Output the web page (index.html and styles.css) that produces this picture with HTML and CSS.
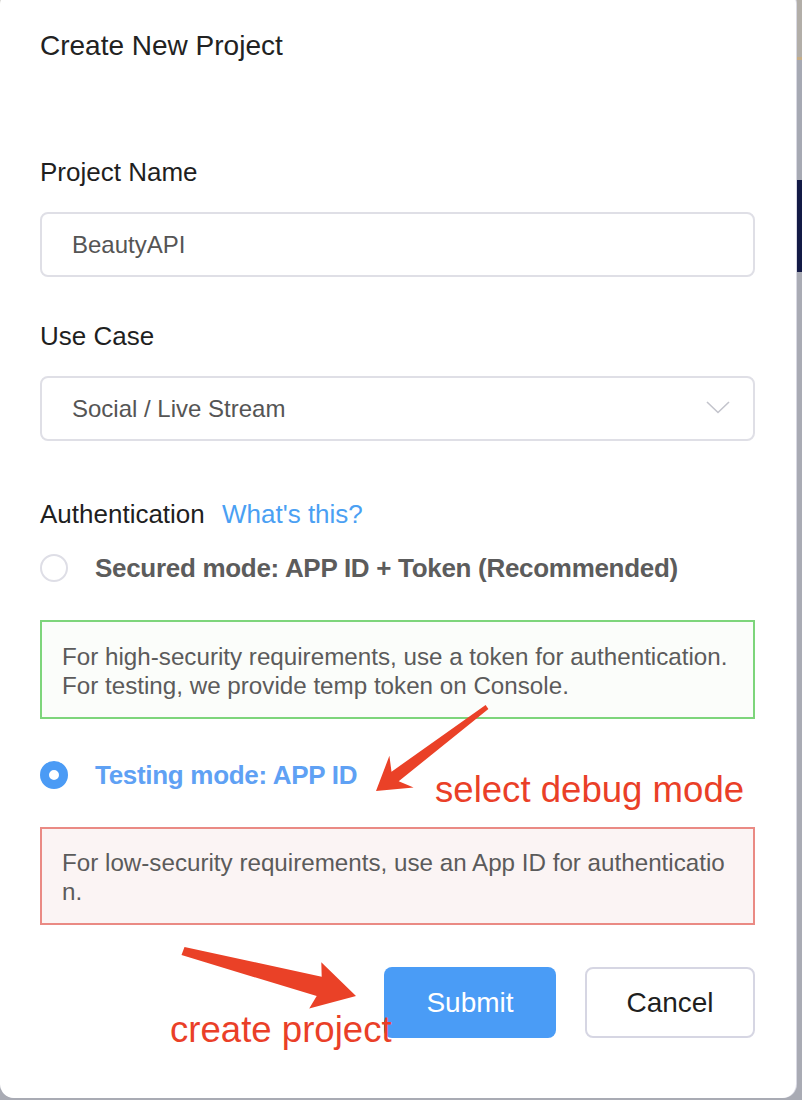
FILE: index.html
```html
<!DOCTYPE html>
<html lang="en">
<head>
<meta charset="utf-8">
<title>Create New Project</title>
<link rel="stylesheet" href="styles.css">
</head>
<body>
<div class="modal">
  <h1 class="title">Create New Project</h1>

  <div class="label">Project Name</div>
  <div class="input">BeautyAPI</div>

  <div class="label label-usecase">Use Case</div>
  <div class="input select">
    <span>Social / Live Stream</span>
    <svg class="chevron" width="24" height="13" viewBox="0 0 24 13"><path d="M1 1 L12 11.5 L23 1" fill="none" stroke="#c3c4cc" stroke-width="1.6"/></svg>
  </div>

  <div class="label label-auth">Authentication <a class="link">What's this?</a></div>

  <div class="radio-row radio-row-first">
    <span class="radio"></span>
    <span class="radio-label">Secured mode: APP ID + Token (Recommended)</span>
  </div>
  <div class="note note-green">For high-security requirements, use a token for authentication.<br>For testing, we provide temp token on Console.</div>

  <div class="radio-row radio-row-second">
    <span class="radio radio-checked"></span>
    <span class="radio-label radio-label-checked">Testing mode: APP ID</span>
  </div>
  <div class="note note-red">For low-security requirements, use an App ID for authenticatio<br>n.</div>

  <div class="actions">
    <button class="btn btn-primary">Submit</button>
    <button class="btn btn-default">Cancel</button>
  </div>

  <svg class="annot-arrows" width="797" height="1100" viewBox="0 0 797 1100">
    <polygon fill="#ea4127" points="376,791 413.6,787.6 398.7,781.3 488.4,708.9 485.6,705.1 391.5,771.7 389.4,755.8"/>
    <polygon fill="#ea4127" points="356,996 309.2,1008.6 316.7,996.1 181.5,955 184.5,947 321.7,976.7 321.3,962.2"/>
  </svg>
  <div class="annot annot-debug">select debug mode</div>
  <div class="annot annot-create">create project</div>
</div>
</body>
</html>
```

FILE: styles.css
```css
html, body {
  margin: 0;
  padding: 0;
}
body {
  width: 802px;
  height: 1100px;
  overflow: hidden;
  background: linear-gradient(to bottom,
    #b2aea8 0px, #b2aea8 57px,
    #c6ad86 57px, #c6ad86 60px,
    #a6a9b3 60px, #a6a9b3 180px,
    #131a46 180px, #131a46 272px,
    #a9abb4 272px, #a9abb4 1100px);
  font-family: "Liberation Sans", Arial, Helvetica, sans-serif;
}
.modal {
  position: relative;
  box-sizing: border-box;
  width: 796px;
  height: 1108px;
  margin-top: -10px;
  padding: 40px 41px 0 40px;
  background: #fff;
  border-radius: 14px;
  box-shadow: 1px 0 0 #d9d9e3;
}
.title {
  margin: 0;
  font-size: 28px;
  line-height: 32px;
  font-weight: normal;
  color: #222;
}
.label {
  margin-top: 95px;
  font-size: 26px;
  line-height: 30px;
  color: #1f1f1f;
}
.label-usecase { margin-top: 44px; }
.label-auth { margin-top: 58px; }
.link {
  color: #4aa0f3;
  margin-left: 10px;
}
.input {
  box-sizing: border-box;
  margin-top: 25px;
  height: 65px;
  border: 2px solid #dfdfe6;
  border-radius: 8px;
  padding: 0 30px;
  display: flex;
  align-items: center;
  font-size: 24px;
  color: #555;
}
.select {
  justify-content: space-between;
  padding-right: 23px;
}
.chevron { display: block; margin-top: -3px; }
.radio-row {
  display: flex;
  align-items: center;
  height: 30px;
}
.radio-row-first { margin-top: 24px; }
.radio-row-second { margin-top: 41px; }
.radio {
  box-sizing: border-box;
  width: 28px;
  height: 28px;
  border-radius: 50%;
  border: 2px solid #dedee6;
  background: #fff;
  margin-right: 27px;
  flex: none;
}
.radio-checked {
  border: 9px solid #4b9bf5;
  background: #fff;
}
.radio-label {
  font-size: 26px;
  font-weight: bold;
  letter-spacing: -0.3px;
  color: #5c5c5c;
}
.radio-label-checked { color: #5fa1f4; }
.note {
  box-sizing: border-box;
  margin-top: 37px;
  border: 2px solid;
  padding: 20px 20px 0 20px;
  font-size: 24.2px;
  line-height: 29px;
  color: #5b5b5b;
}
.note-green {
  height: 99px;
  border-color: #7dd57b;
  background: #fbfdfa;
}
.note-red {
  height: 98px;
  padding-top: 19px;
  border-color: #ea8a84;
  background: #fbf4f4;
}
.actions {
  margin-top: 42px;
  display: flex;
  justify-content: flex-end;
  gap: 29px;
}
.btn {
  box-sizing: border-box;
  width: 172px;
  height: 71px;
  border-radius: 8px;
  font-family: inherit;
  font-size: 28px;
  padding: 0;
}
.btn-primary {
  background: #4a9cf6;
  border: none;
  color: #fff;
}
.btn-default {
  width: 170px;
  background: #fff;
  border: 2px solid #d6d6e3;
  color: #1f1f1f;
}
.annot-arrows {
  position: absolute;
  left: 0;
  top: 10px;
  pointer-events: none;
}
.annot {
  position: absolute;
  font-size: 36.6px;
  line-height: 40px;
  color: #ea3f28;
  white-space: nowrap;
}
.annot-debug { left: 435px; top: 780px; }
.annot-create { left: 170px; top: 1020px; }
```
